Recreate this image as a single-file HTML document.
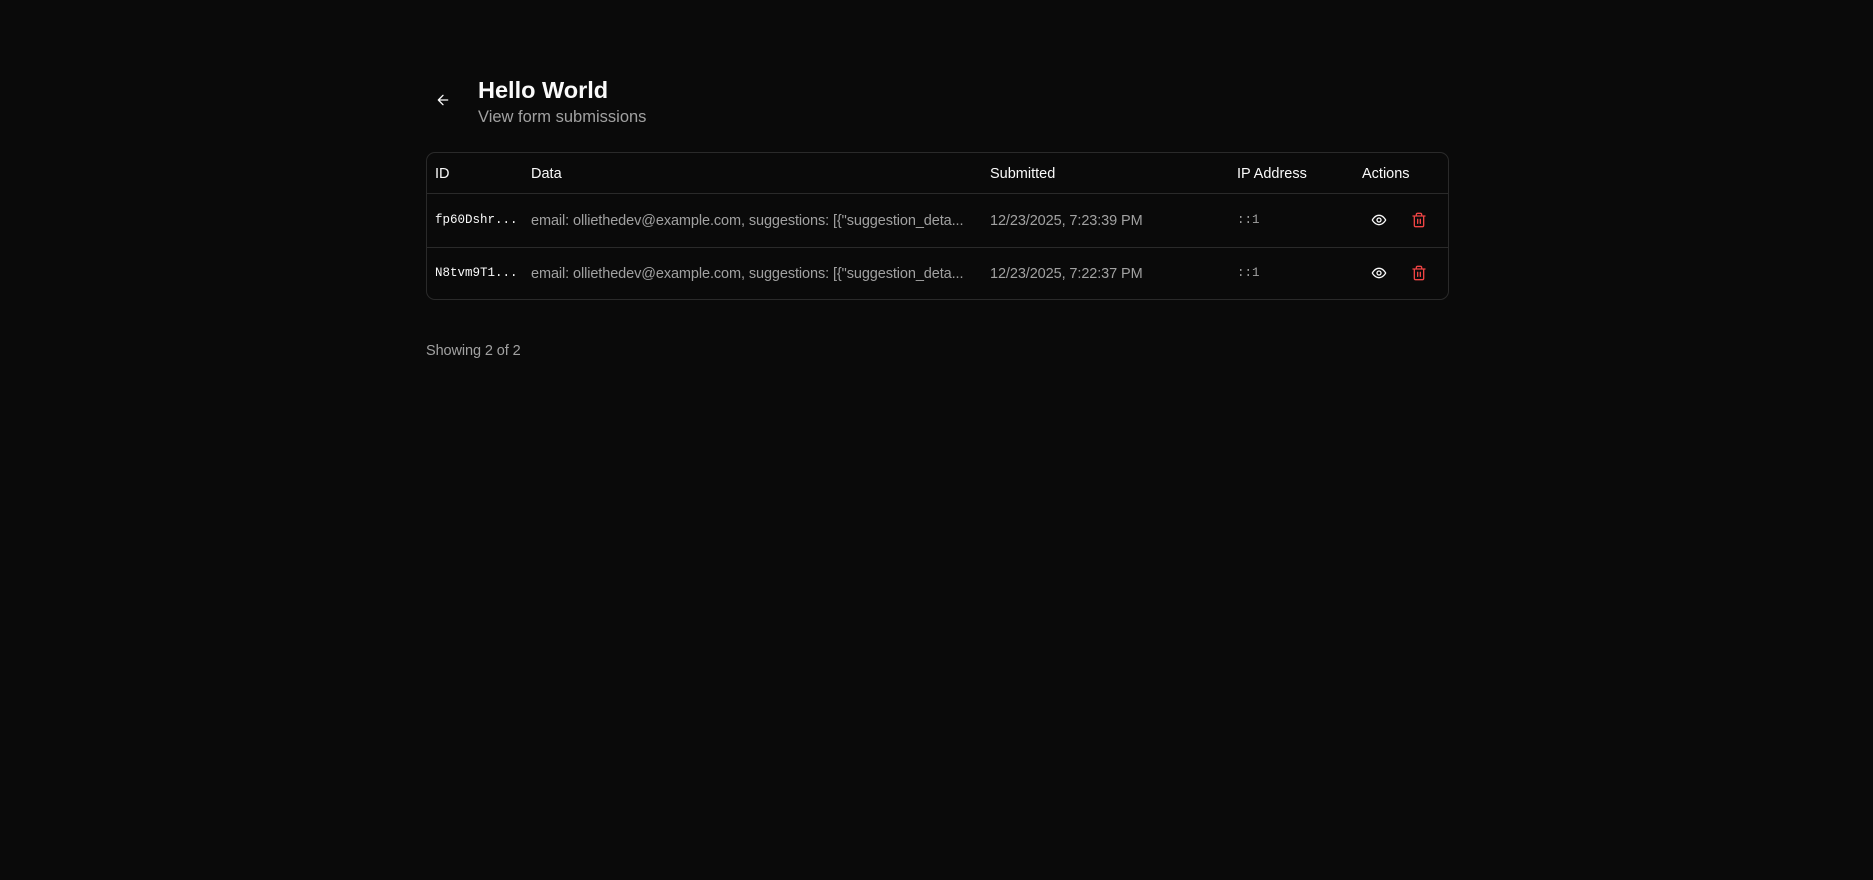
<!DOCTYPE html>
<html><head><meta charset="utf-8"><style>
*{box-sizing:border-box;margin:0;padding:0}
body{width:1873px;height:880px;background:#0a0a0a;color:#fafafa;font-family:"Liberation Sans",sans-serif;position:relative;overflow:hidden}
.abs{position:absolute;white-space:nowrap}
h1{position:absolute;left:478px;top:75px;font-size:23.5px;font-weight:700;line-height:30px}
.sub{left:478px;top:106px;font-size:16.5px;color:#a1a1a1;line-height:22px}
.tbl{position:absolute;left:426px;top:152px;width:1023px;height:148px;border:1px solid #2a2a2a;border-radius:9px}
.line{position:absolute;left:0;right:0;height:1px;background:#2a2a2a}
.h{font-size:14.5px;color:#fafafa;line-height:18px}
.d{font-size:14.5px;color:#a1a1a1;line-height:18px;letter-spacing:-0.1px}
.m{font-family:"Liberation Mono",monospace;font-size:12.5px;line-height:18px}
</style></head><body>
<svg class="abs" style="left:435px;top:92px" width="16" height="16" viewBox="0 0 24 24" fill="none" stroke="#fafafa" stroke-width="2" stroke-linecap="round" stroke-linejoin="round"><path d="M19 12H5M12 19l-7-7 7-7"/></svg>
<h1>Hello World</h1>
<div class="abs sub">View form submissions</div>
<div class="tbl">
<div class="line" style="top:40px"></div>
<div class="line" style="top:94px"></div>
</div>
<div class="abs h" style="left:435px;top:165px">ID</div>
<div class="abs h" style="left:531px;top:165px">Data</div>
<div class="abs h" style="left:990px;top:165px">Submitted</div>
<div class="abs h" style="left:1237px;top:165px">IP Address</div>
<div class="abs h" style="left:1362px;top:165px">Actions</div>

<div class="abs m" style="left:435px;top:211px;color:#fafafa">fp60Dshr...</div>
<div class="abs d" style="left:531px;top:212px">email: olliethedev@example.com, suggestions: [{"suggestion_deta...</div>
<div class="abs d" style="left:990px;top:212px">12/23/2025, 7:23:39 PM</div>
<div class="abs m" style="left:1237px;top:211px;color:#a1a1a1">::1</div>

<div class="abs m" style="left:435px;top:264px;color:#fafafa">N8tvm9T1...</div>
<div class="abs d" style="left:531px;top:265px">email: olliethedev@example.com, suggestions: [{"suggestion_deta...</div>
<div class="abs d" style="left:990px;top:265px">12/23/2025, 7:22:37 PM</div>
<div class="abs m" style="left:1237px;top:264px;color:#a1a1a1">::1</div>

<svg class="abs" style="left:1371px;top:212px" width="16" height="16" viewBox="0 0 24 24" fill="none" stroke="#fafafa" stroke-width="2" stroke-linecap="round" stroke-linejoin="round"><path d="M2 12s3.5-7 10-7 10 7 10 7-3.5 7-10 7S2 12 2 12z"/><circle cx="12" cy="12" r="3"/></svg>
<svg class="abs" style="left:1411px;top:212px" width="16" height="16" viewBox="0 0 24 24" fill="none" stroke="#ef4444" stroke-width="2" stroke-linecap="round" stroke-linejoin="round"><path d="M3 6h18M19 6v14a2 2 0 0 1-2 2H7a2 2 0 0 1-2-2V6M8 6V4a2 2 0 0 1 2-2h4a2 2 0 0 1 2 2v2M10 11v6M14 11v6"/></svg>
<svg class="abs" style="left:1371px;top:265px" width="16" height="16" viewBox="0 0 24 24" fill="none" stroke="#fafafa" stroke-width="2" stroke-linecap="round" stroke-linejoin="round"><path d="M2 12s3.5-7 10-7 10 7 10 7-3.5 7-10 7S2 12 2 12z"/><circle cx="12" cy="12" r="3"/></svg>
<svg class="abs" style="left:1411px;top:265px" width="16" height="16" viewBox="0 0 24 24" fill="none" stroke="#ef4444" stroke-width="2" stroke-linecap="round" stroke-linejoin="round"><path d="M3 6h18M19 6v14a2 2 0 0 1-2 2H7a2 2 0 0 1-2-2V6M8 6V4a2 2 0 0 1 2-2h4a2 2 0 0 1 2 2v2M10 11v6M14 11v6"/></svg>

<div class="abs d" style="left:426px;top:342px">Showing 2 of 2</div>
</body></html>
